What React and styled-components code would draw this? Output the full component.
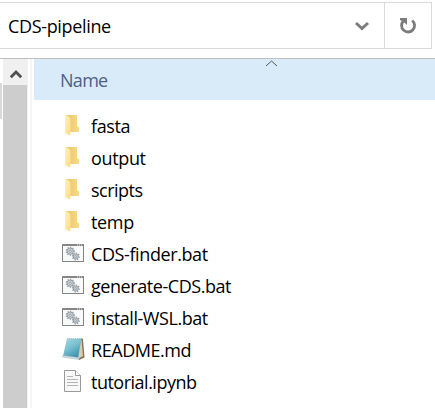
import React from "react";
import styled, { createGlobalStyle } from "styled-components";

const Global = createGlobalStyle`
  * { box-sizing: border-box; }
  body { margin: 0; background: #fff; overflow: hidden; }
`;
const Window = styled.div`
  width: 435px; height: 408px; display: flex; flex-direction: column;
  background: #fff; color: #000; overflow: hidden;
  font: 18px/24px "Open Sans", "Noto Sans", sans-serif;
`;
const Label = styled.span`
  white-space: nowrap;
  letter-spacing: ${(p) => p.$spacing || 0}px;
`;
const AddressBar = styled.header`
  height: 47px; margin: 2px 3px 9px 0; display: flex; flex: none;
  border: 1px solid #d9d9d9; border-left: 0;
`;
const Path = styled.div`
  flex: 1; display: flex; align-items: center; justify-content: space-between;
  padding: 0 14px 0 8px;
`;
const Refresh = styled.button`
  width: 47px; padding: 0; border: 0; border-left: 1px solid #d9d9d9;
  background: #fff; display: grid; place-items: center;
`;
const Body = styled.div`
  flex: 1; display: flex; min-height: 0; border-top: 1px solid #bfbfbf;
`;
const PaneEdge = styled.div`
  width: 2px; height: 36px; margin: 24px 1px 0 0; background: #d9d9d9;
`;
const Scrollbar = styled.div`
  width: 25px; background: #f0f0f0; display: flex; flex-direction: column;
`;
const ScrollUp = styled.div`
  height: 26px; padding-top: 3px; display: grid; place-items: center;
`;
const Thumb = styled.div`
  flex: 1; width: 24px; background: #cdcdcd;
`;
const Splitter = styled.div`
  width: 2px; margin: 0 2px; background: #f5f5f5;
`;
const Files = styled.main`
  flex: 1; min-width: 0;
`;
const ColumnHead = styled.div`
  height: 41px; padding: 9px 0 0 26px; background: #d9ebf9; color: #4c6084;
  position: relative;
`;
const SortMark = styled.svg`
  position: absolute; left: 231px; top: 1px;
`;
const List = styled.ul`
  list-style: none; margin: 10px 0 0; padding: 0 0 0 27px;
`;
const Row = styled.li`
  height: 32px; display: flex; align-items: center; gap: 6px;
`;

const Folder = () => (
  <svg width="24" height="24" viewBox="0 0 24 24">
    <defs>
      <linearGradient id="flap" x1="0" x2="1" y1="0" y2="1">
        <stop offset="0" stopColor="#fff0c2" />
        <stop offset="1" stopColor="#fbdc84" />
      </linearGradient>
      <linearGradient id="back" x1="0" x2="1" y1="0" y2="0">
        <stop offset="0" stopColor="#e9c466" />
        <stop offset="1" stopColor="#f8da86" />
      </linearGradient>
    </defs>
    <path d="M5 1h11v11l2 1.5V18H7z" fill="url(#back)" />
    <path d="M4 1h1l4.5 3v17.5L4 19z" fill="url(#flap)" />
  </svg>
);
const Gear = ({ x, y, r }) => (
  <g transform={`translate(${x} ${y})`}>
    <circle r={r} fill="#cbd1d5" stroke="#939ca2" strokeWidth="1" />
    <circle r={r + 0.8} fill="none" stroke="#929ba2" strokeWidth="1.1" strokeDasharray="1.3 1.3" />
    <circle r={r * 0.35} fill="#fff" stroke="#808b92" strokeWidth=".8" />
  </g>
);
const Batch = () => (
  <svg width="24" height="24" viewBox="0 0 24 24">
    <rect x="1.5" y="2.5" width="21" height="17" fill="#f8f9f9" stroke="#858585" />
    <path d="M1 2h22v2H1z" fill="#858585" />
    <path d="M16 3h1m1 0h1m1 0h1" stroke="#eee" />
    <Gear x={9.2} y={9.2} r={3.2} />
    <Gear x={14.8} y={14.5} r={2.6} />
  </svg>
);
const Notepad = () => (
  <svg width="24" height="24" viewBox="0 0 24 24">
    <defs>
      <linearGradient id="pad" x1="0" x2=".6" y1="0" y2="1">
        <stop offset="0" stopColor="#a5d9e2" />
        <stop offset=".5" stopColor="#7cc1d1" />
        <stop offset="1" stopColor="#3b92ae" />
      </linearGradient>
    </defs>
    <path d="M20 0l2 1 1.5 18.5L18 22z" fill="#8a7352" />
    <path d="M20.5 1l1.5 17-4.5 2.5-1-1z" fill="#d7cbb2" />
    <path d="M6 .5h14.5L17 20 2 18z" fill="url(#pad)" />
    <path d="M6 .5h14" stroke="#aec1c5" strokeWidth="1.2" strokeDasharray="1 1" />
    <path d="M2 17.5L17 19.5l1 2L1.5 19z" fill="#d8e5e8" stroke="#92abb3" strokeWidth=".5" />
  </svg>
);
const Page = () => (
  <svg width="24" height="24" viewBox="0 0 24 24">
    <path d="M3.5 .5h11l5 5v16h-16z" fill="#f8f8f8" stroke="#999" />
    <path d="M14.5 .5v5h5" fill="#fff" stroke="#999" />
    <path d="M6 6.5h6M6 9.5h11M6 12.5h11M6 15.5h11" stroke="#b4b4b4" />
  </svg>
);

const files = [
  ["fasta", Folder, -0.4], ["output", Folder, -0.35], ["scripts", Folder, -0.5],
  ["temp", Folder, -0.35], ["CDS-finder.bat", Batch, -0.4],
  ["generate-CDS.bat", Batch, -0.44], ["install-WSL.bat", Batch, -0.45],
  ["README.md", Notepad, -0.45], ["tutorial.ipynb", Page, -0.5],
];

export default function App() {
  return (
    <Window>
      <Global />
      <AddressBar>
        <Path>
          <Label $spacing={-0.34}>CDS-pipeline</Label>
          <svg width="16" height="12" viewBox="0 0 16 12">
            <path d="M2 3l6 5.5L14 3" fill="none" stroke="#7c7c7c" strokeWidth="3" />
          </svg>
        </Path>
        <Refresh aria-label="Refresh">
          <svg width="20" height="20" viewBox="0 0 20 20">
            <path d="M14.2 4.5A6.5 6.5 0 1 1 5.4 5" fill="none" stroke="#7c7c7c" strokeWidth="2.8" />
            <path d="M2 2h7v7L7 7 5.5 6 2 4z" fill="#7c7c7c" />
          </svg>
        </Refresh>
      </AddressBar>
      <Body>
        <PaneEdge />
        <Scrollbar>
          <ScrollUp>
            <svg width="12" height="10" viewBox="0 0 12 10">
              <path d="M.8 8.2L6 3l5.2 5.2" fill="none" stroke="#505050" strokeWidth="2.8" />
            </svg>
          </ScrollUp>
          <Thumb />
        </Scrollbar>
        <Splitter />
        <Files>
          <ColumnHead>
            <Label $spacing={-0.7}>Name</Label>
            <SortMark width="13" height="7" viewBox="0 0 13 7">
              <path d="M1 6l5.5-5L12 6" fill="none" stroke="#555" />
            </SortMark>
          </ColumnHead>
          <List>
            {files.map(([name, Icon, spacing]) => (
              <Row key={name}><Icon /><Label $spacing={spacing}>{name}</Label></Row>
            ))}
          </List>
        </Files>
      </Body>
    </Window>
  );
}
